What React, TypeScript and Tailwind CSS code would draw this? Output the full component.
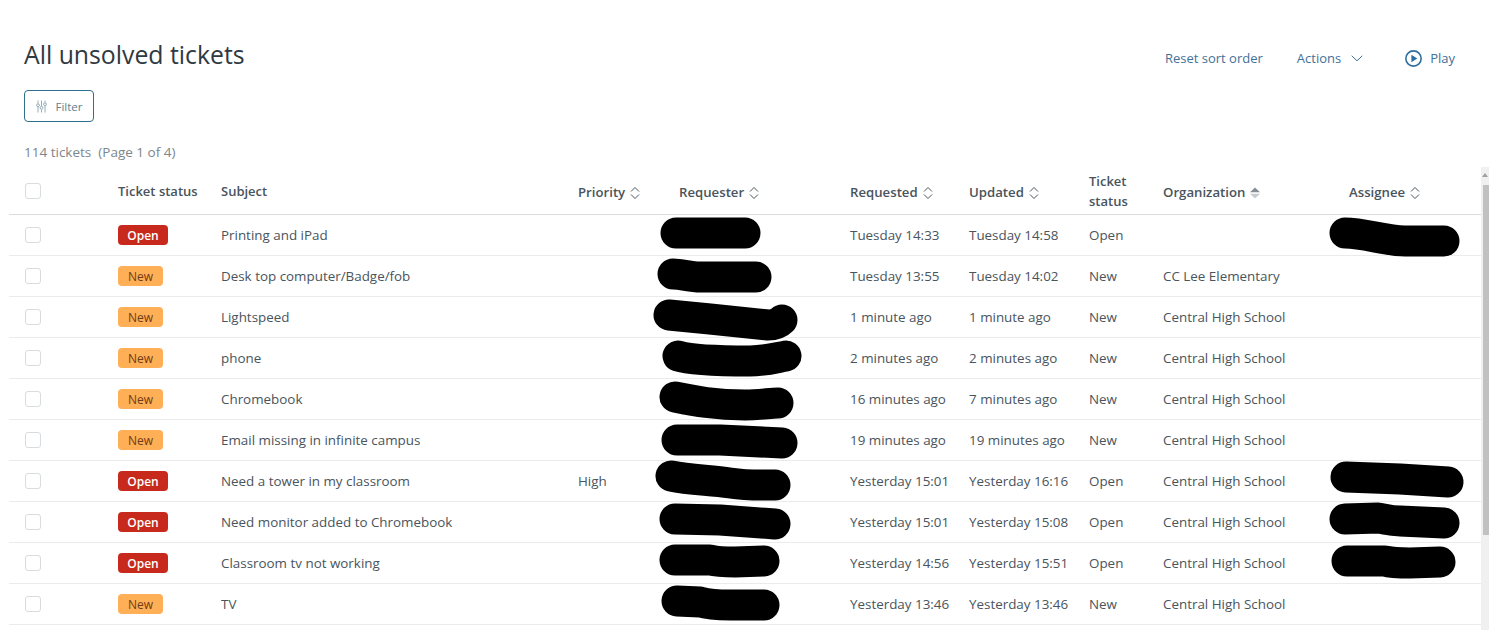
import type { ReactNode } from "react";

type Ticket = {
  status: "Open" | "New";
  subject: string;
  priority?: string;
  requested: string;
  updated: string;
  org?: string;
  requesterMark: string;
  assigneeMark?: string;
};

const tickets: Ticket[] = [
  { status: "Open", subject: "Printing and iPad", requested: "Tuesday 14:33", updated: "Tuesday 14:58", requesterMark: "M676 233 L745 233", assigneeMark: "M1345 233 C1365 233 1385 241 1405 241 L1444 241" },
  { status: "New", subject: "Desk top computer/Badge/fob", requested: "Tuesday 13:55", updated: "Tuesday 14:02", org: "CC Lee Elementary", requesterMark: "M673 274 C682 274 690 277 700 277 L756 277" },
  { status: "New", subject: "Lightspeed", requested: "1 minute ago", updated: "1 minute ago", org: "Central High School", requesterMark: "M669 315 L710 319 L768 325 C775 325 780 322 782 320" },
  { status: "New", subject: "phone", requested: "2 minutes ago", updated: "2 minutes ago", org: "Central High School", requesterMark: "M678 356 C690 360 720 361 750 361 C765 361 775 358 786 356" },
  { status: "New", subject: "Chromebook", requested: "16 minutes ago", updated: "7 minutes ago", org: "Central High School", requesterMark: "M675 397 C695 401 715 405 745 405 C760 405 770 403 778 403" },
  { status: "New", subject: "Email missing in infinite campus", requested: "19 minutes ago", updated: "19 minutes ago", org: "Central High School", requesterMark: "M677 440 L720 440 L782 443" },
  { status: "Open", subject: "Need a tower in my classroom", priority: "High", requested: "Yesterday 15:01", updated: "Yesterday 16:16", org: "Central High School", requesterMark: "M671 476 C690 480 710 480 730 483 C750 486 760 485 775 485", assigneeMark: "M1346 477 L1400 479 L1448 482" },
  { status: "Open", subject: "Need monitor added to Chromebook", requested: "Yesterday 15:01", updated: "Yesterday 15:08", org: "Central High School", requesterMark: "M675 519 L720 520 L775 524", assigneeMark: "M1345 519 L1378 518 C1385 519 1390 521 1400 521 L1444 523" },
  { status: "Open", subject: "Classroom tv not working", requested: "Yesterday 14:56", updated: "Yesterday 15:51", org: "Central High School", requesterMark: "M675 560 L710 560 C718 562 725 562 735 562 L764 561", assigneeMark: "M1347 561 L1385 561 C1392 563 1400 563 1410 563 L1440 562" },
  { status: "New", subject: "TV", requested: "Yesterday 13:46", updated: "Yesterday 13:46", org: "Central High School", requesterMark: "M677 601 L700 602 C710 605 720 605 730 605 L764 605" },
];

const columns = "grid grid-cols-[109px_103px_357px_101px_171px_119px_120px_74px_186px_132px]";

function SortIcon({ active }: { active?: boolean }) {
  if (active) {
    return (
      <svg width="12" height="12" viewBox="0 0 12 12" className="ml-[4px] shrink-0">
        <path d="M6 0.5 L11 5.2 H1 Z" fill="#868e94" />
        <path d="M6 11.5 L11 6.8 H1 Z" fill="#c6cbcf" />
      </svg>
    );
  }
  return (
    <svg width="12" height="14" viewBox="0 0 12 14" fill="none" stroke="#49545c" strokeWidth="1" className="ml-[4px] shrink-0">
      <path d="M2 5.5 L6 1.5 L10 5.5" />
      <path d="M2 8.5 L6 12.5 L10 8.5" />
    </svg>
  );
}

function HeaderLabel({ label, active }: { label: string; active?: boolean }) {
  return (
    <div className="flex items-center pt-[4px] text-[13.2px] font-semibold text-[#49545c]">
      {label}
      <SortIcon active={active} />
    </div>
  );
}

function Checkbox() {
  return <div className="ml-4 h-4 w-4 rounded-[3px] border border-[#d8dcde] bg-white" />;
}

function StatusBadge({ status }: { status: Ticket["status"] }) {
  const open = status === "Open";
  return (
    <span
      className={`flex h-5 items-center justify-center rounded-[4px] pt-px text-xs ${
        open ? "w-[50px] bg-[#c72a1c] font-semibold text-white" : "w-[45px] bg-[#ffb057] font-medium text-[#703b15]"
      }`}
    >
      {status}
    </span>
  );
}

function Cell({ children }: { children?: ReactNode }) {
  return <div className="pt-px">{children}</div>;
}

function Row({ ticket, index }: { ticket: Ticket; index: number }) {
  const top = 215 + index * 41;
  return (
    <div className={`${columns} relative h-[41px] items-center border-b border-[#e9ebed] text-[13.4px] text-[#49545c]`}>
      <Checkbox />
      <StatusBadge status={ticket.status} />
      <Cell>{ticket.subject}</Cell>
      <Cell>{ticket.priority}</Cell>
      <Cell />
      <Cell>{ticket.requested}</Cell>
      <Cell>{ticket.updated}</Cell>
      <Cell>{ticket.status}</Cell>
      <Cell>{ticket.org}</Cell>
      <Cell />
      <svg
        className="absolute left-0 top-0 overflow-visible"
        width="1472"
        height="41"
        viewBox={`9 ${top} 1472 41`}
        fill="none"
        stroke="#000"
        strokeWidth="31"
        strokeLinecap="round"
        strokeLinejoin="round"
      >
        <path d={ticket.requesterMark} />
        {ticket.assigneeMark && <path d={ticket.assigneeMark} />}
      </svg>
    </div>
  );
}

export default function App() {
  return (
    <div className="relative h-[630px] w-[1489px] overflow-hidden bg-white font-['Open_Sans','Noto_Sans',sans-serif]">
      <div className="flex items-start justify-between pl-6 pr-[34px] pt-[38px]">
        <h1 className="text-[24.8px] leading-8 text-[#2f3941]">All unsolved tickets</h1>
        <div className="mt-[11px] flex items-center text-[13px] text-[#3f7199]">
          <span>Reset sort order</span>
          <span className="ml-[34px]">Actions</span>
          <svg width="12" height="7" viewBox="0 0 12 7" fill="none" stroke="#3f7199" strokeWidth="1" className="ml-[10px]">
            <path d="M0.7 0.8 L6 5.8 L11.3 0.8" />
          </svg>
          <svg width="17" height="17" viewBox="0 0 16 16" className="ml-[42px]">
            <circle cx="8" cy="8" r="7.2" fill="none" stroke="#2f6f9f" strokeWidth="1.5" />
            <path d="M6 4.4 L11.6 8 L6 11.6 Z" fill="#2f6f9f" />
          </svg>
          <span className="ml-[8px]">Play</span>
        </div>
      </div>

      <button className="ml-6 mt-[20px] flex h-8 w-[70px] items-center justify-center gap-[9px] rounded-[4px] border border-[#2f6f8f] pt-px text-[11.5px] text-[#5d7f95]">
        <svg width="11" height="13" viewBox="0 0 11 13" fill="none" stroke="#7d98aa" strokeWidth="0.8">
          <path d="M2 0.5 V3.5 M2 7 V12.5 M5.5 0.5 V6 M5.5 9.5 V12.5 M9 0.5 V2.5 M9 6 V12.5" />
          <circle cx="2" cy="5.2" r="1.4" />
          <circle cx="5.5" cy="7.8" r="1.4" />
          <circle cx="9" cy="4.2" r="1.4" />
        </svg>
        Filter
      </button>

      <div className="ml-6 mt-[21px] text-[13.5px] leading-[18px] text-[#7d868c]">114 tickets&nbsp; (Page 1 of 4)</div>

      <div className="ml-[9px] mt-[7px] w-[1472px]">
        <div className={`${columns} h-[47px] items-center border-b border-[#d8dcde]`}>
          <Checkbox />
          <div className="pt-[2px] text-[13px] font-semibold text-[#49545c]">Ticket status</div>
          <div className="pt-[2px] text-[13px] font-semibold text-[#49545c]">Subject</div>
          <HeaderLabel label="Priority" />
          <HeaderLabel label="Requester" />
          <HeaderLabel label="Requested" />
          <HeaderLabel label="Updated" />
          <div className="text-[13px] font-semibold leading-5 text-[#49545c]">
            Ticket
            <br />
            status
          </div>
          <HeaderLabel label="Organization" active />
          <HeaderLabel label="Assignee" />
        </div>
        {tickets.map((ticket, i) => (
          <Row key={i} ticket={ticket} index={i} />
        ))}
      </div>

      {/* scrollbar */}
      <div className="absolute right-0 top-[167px] flex h-[463px] w-2 flex-col items-end bg-[#f0f0f0]">
        <div className="mr-[1px] mt-[6px] h-0 w-0 border-x-[3px] border-b-[4px] border-x-transparent border-b-[#a0a0a0]" />
        <div className="mt-[8px] h-[350px] w-[6px] bg-[#c1c1c1]" />
      </div>
    </div>
  );
}
